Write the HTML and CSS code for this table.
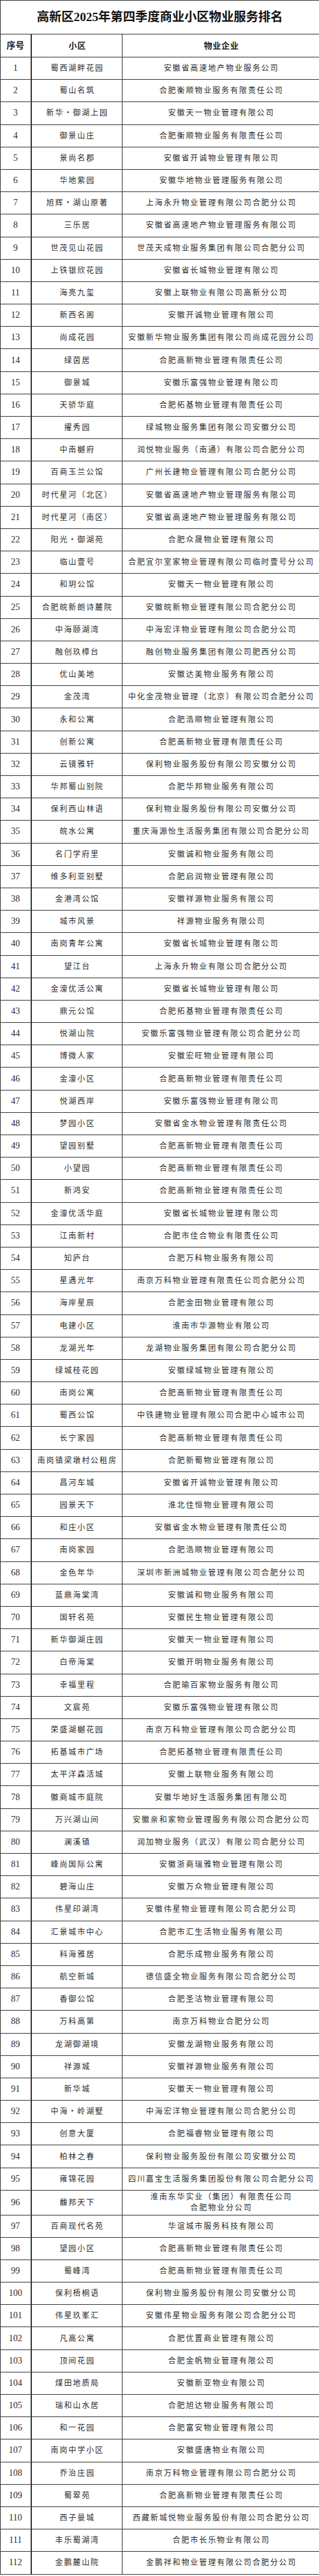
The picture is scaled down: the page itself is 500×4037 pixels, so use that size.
FILE: index.html
```html
<!DOCTYPE html>
<html lang="zh-CN">
<head>
<meta charset="utf-8">
<title>高新区2025年第四季度商业小区物业服务排名</title>
<link rel="stylesheet" href="styles.css">
</head>
<body>
<table class="rank">
<colgroup><col class="c-no"><col class="c-name"><col class="c-co"></colgroup>
<thead>
<tr class="title-row"><th colspan="3" class="title">高新区2025年第四季度商业小区物业服务排名</th></tr>
<tr class="head-row"><th class="h no">序号</th><th class="h">小区</th><th class="h">物业企业</th></tr>
</thead>
<tbody>
<tr><td class="no">1</td><td>蜀西湖畔花园</td><td>安徽省高速地产物业服务公司</td></tr>
<tr><td class="no">2</td><td>蜀山名筑</td><td>合肥衡顺物业服务有限责任公司</td></tr>
<tr><td class="no">3</td><td>新华・御湖上园</td><td>安徽天一物业管理有限公司</td></tr>
<tr><td class="no">4</td><td>御景山庄</td><td>合肥衡顺物业服务有限责任公司</td></tr>
<tr><td class="no">5</td><td>景尚名郡</td><td>安徽省开诚物业管理有限公司</td></tr>
<tr><td class="no">6</td><td>华地紫园</td><td>安徽华地物业管理服务有限公司</td></tr>
<tr><td class="no">7</td><td>旭辉・湖山原著</td><td>上海永升物业管理有限公司合肥分公司</td></tr>
<tr><td class="no">8</td><td>三乐居</td><td>安徽省高速地产物业管理服务有限公司</td></tr>
<tr><td class="no">9</td><td>世茂见山花园</td><td>世茂天成物业服务集团有限公司合肥分公司</td></tr>
<tr><td class="no">10</td><td>上铁银欣花园</td><td>安徽省长城物业管理有限公司</td></tr>
<tr><td class="no">11</td><td>海亮九玺</td><td>安徽上联物业有限公司高新分公司</td></tr>
<tr><td class="no">12</td><td>新西名阁</td><td>安徽开诚物业管理有限公司</td></tr>
<tr><td class="no">13</td><td>尚成花园</td><td>安徽新华物业服务集团有限公司尚成花园分公司</td></tr>
<tr><td class="no">14</td><td>绿茵居</td><td>合肥高新物业管理有限责任公司</td></tr>
<tr><td class="no">15</td><td>御景城</td><td>安徽乐富强物业管理有限公司</td></tr>
<tr><td class="no">16</td><td>天骄华庭</td><td>合肥拓基物业管理有限责任公司</td></tr>
<tr><td class="no">17</td><td>擢秀园</td><td>绿城物业服务集团有限公司安徽分公司</td></tr>
<tr><td class="no">18</td><td>中南樾府</td><td>润悦物业服务（南通）有限公司合肥分公司</td></tr>
<tr><td class="no">19</td><td>百商玉兰公馆</td><td>广州长建物业管理有限公司合肥分公司</td></tr>
<tr><td class="no">20</td><td>时代星河（北区）</td><td>安徽省高速地产物业管理服务有限公司</td></tr>
<tr><td class="no">21</td><td>时代星河（南区）</td><td>安徽省高速地产物业管理服务有限公司</td></tr>
<tr><td class="no">22</td><td>阳光・御湖苑</td><td>合肥众晟物业管理有限公司</td></tr>
<tr><td class="no">23</td><td>临山壹号</td><td>合肥宜尔室家物业管理有限公司临时壹号分公司</td></tr>
<tr><td class="no">24</td><td>和玥公馆</td><td>安徽天一物业管理有限公司</td></tr>
<tr><td class="no">25</td><td>合肥皖新朗诗麓院</td><td>安徽皖新物业管理有限公司合肥分公司</td></tr>
<tr><td class="no">26</td><td>中海颐湖湾</td><td>中海宏洋物业管理有限公司合肥分公司</td></tr>
<tr><td class="no">27</td><td>融创玖樟台</td><td>融创物业服务集团有限公司肥西分公司</td></tr>
<tr><td class="no">28</td><td>优山美地</td><td>安徽达美物业服务有限公司</td></tr>
<tr><td class="no">29</td><td>金茂湾</td><td>中化金茂物业管理（北京）有限公司合肥分公司</td></tr>
<tr><td class="no">30</td><td>永和公寓</td><td>合肥浩顺物业管理有限公司</td></tr>
<tr><td class="no">31</td><td>创新公寓</td><td>合肥高新物业管理有限责任公司</td></tr>
<tr><td class="no">32</td><td>云镜雅轩</td><td>保利物业服务股份有限公司安徽分公司</td></tr>
<tr><td class="no">33</td><td>华邦蜀山别院</td><td>合肥华邦物业服务有限公司</td></tr>
<tr><td class="no">34</td><td>保利西山林语</td><td>保利物业服务股份有限公司安徽分公司</td></tr>
<tr><td class="no">35</td><td>皖水公寓</td><td>重庆海源怡生活服务集团有限公司合肥分公司</td></tr>
<tr><td class="no">36</td><td>名门学府里</td><td>安徽诚和物业服务有限公司</td></tr>
<tr><td class="no">37</td><td>维多利亚别墅</td><td>合肥启润物业管理有限公司</td></tr>
<tr><td class="no">38</td><td>金港湾公馆</td><td>安徽祥源物业服务有限公司</td></tr>
<tr><td class="no">39</td><td>城市风景</td><td>祥源物业服务有限公司</td></tr>
<tr><td class="no">40</td><td>南岗青年公寓</td><td>安徽省长城物业管理有限公司</td></tr>
<tr><td class="no">41</td><td>望江台</td><td>上海永升物业有限公司合肥分公司</td></tr>
<tr><td class="no">42</td><td>金濠优活公寓</td><td>安徽省长城物业管理有限公司</td></tr>
<tr><td class="no">43</td><td>鼎元公馆</td><td>合肥拓基物业管理有限责任公司</td></tr>
<tr><td class="no">44</td><td>悦湖山院</td><td>安徽乐富强物业管理有限公司合肥分公司</td></tr>
<tr><td class="no">45</td><td>博微人家</td><td>安徽宏旺物业管理有限公司</td></tr>
<tr><td class="no">46</td><td>金濠小区</td><td>合肥高新物业管理有限责任公司</td></tr>
<tr><td class="no">47</td><td>悦湖西岸</td><td>安徽乐富强物业管理有限公司</td></tr>
<tr><td class="no">48</td><td>梦园小区</td><td>安徽省金水物业管理有限责任公司</td></tr>
<tr><td class="no">49</td><td>望园别墅</td><td>合肥高新物业管理有限责任公司</td></tr>
<tr><td class="no">50</td><td>小望园</td><td>合肥高新物业管理有限责任公司</td></tr>
<tr><td class="no">51</td><td>新鸿安</td><td>合肥高新物业管理有限责任公司</td></tr>
<tr><td class="no">52</td><td>金濠优活华庭</td><td>安徽省长城物业管理有限公司</td></tr>
<tr><td class="no">53</td><td>江南新村</td><td>合肥市佳合物业有限责任公司</td></tr>
<tr><td class="no">54</td><td>知庐台</td><td>合肥万科物业服务有限公司</td></tr>
<tr><td class="no">55</td><td>星遇光年</td><td>南京万科物业管理有限责任公司合肥分公司</td></tr>
<tr><td class="no">56</td><td>海岸星辰</td><td>合肥金田物业管理有限公司</td></tr>
<tr><td class="no">57</td><td>电建小区</td><td>淮南市华源物业有限公司</td></tr>
<tr><td class="no">58</td><td>龙湖光年</td><td>龙湖物业服务集团有限公司合肥分公司</td></tr>
<tr><td class="no">59</td><td>绿城桂花园</td><td>安徽绿城物业管理有限公司</td></tr>
<tr><td class="no">60</td><td>南岗公寓</td><td>合肥高新物业管理有限责任公司</td></tr>
<tr><td class="no">61</td><td>蜀西公馆</td><td>中铁建物业管理有限公司合肥中心城市公司</td></tr>
<tr><td class="no">62</td><td>长宁家园</td><td>合肥高新物业管理有限责任公司</td></tr>
<tr><td class="no">63</td><td>南岗镇梁墩村公租房</td><td>合肥新蜀物业管理有限公司</td></tr>
<tr><td class="no">64</td><td>昌河车城</td><td>安徽省开诚物业管理有限公司</td></tr>
<tr><td class="no">65</td><td>园景天下</td><td>淮北佳恒物业管理有限公司</td></tr>
<tr><td class="no">66</td><td>和庄小区</td><td>安徽省金水物业管理有限责任公司</td></tr>
<tr><td class="no">67</td><td>南岗家园</td><td>合肥浩顺物业管理有限公司</td></tr>
<tr><td class="no">68</td><td>金色年华</td><td>深圳市新洲城物业管理有限公司合肥分公司</td></tr>
<tr><td class="no">69</td><td>蓝鼎海棠湾</td><td>安徽诚和物业服务有限公司</td></tr>
<tr><td class="no">70</td><td>国轩名苑</td><td>安徽民生物业管理有限公司</td></tr>
<tr><td class="no">71</td><td>新华御湖庄园</td><td>安徽天一物业管理有限公司</td></tr>
<tr><td class="no">72</td><td>白帝海棠</td><td>安徽开明物业服务有限公司</td></tr>
<tr><td class="no">73</td><td>幸福里程</td><td>合肥瑜百家物业服务有限公司</td></tr>
<tr><td class="no">74</td><td>文宸苑</td><td>安徽乐富强物业管理有限公司</td></tr>
<tr><td class="no">75</td><td>荣盛湖樾花园</td><td>南京万科物业管理有限公司合肥分公司</td></tr>
<tr><td class="no">76</td><td>拓基城市广场</td><td>合肥拓基物业管理有限责任公司</td></tr>
<tr><td class="no">77</td><td>太平洋森活城</td><td>安徽上联物业服务有限公司</td></tr>
<tr><td class="no">78</td><td>徽商城市庭院</td><td>安徽华地好生活服务集团有限公司</td></tr>
<tr><td class="no">79</td><td>万兴湖山间</td><td>安徽亲和家物业管理服务有限公司合肥分公司</td></tr>
<tr><td class="no">80</td><td>澜溪镇</td><td>润加物业服务（武汉）有限公司合肥分公司</td></tr>
<tr><td class="no">81</td><td>峰尚国际公寓</td><td>安徽浙商瑞雅物业管理有限公司</td></tr>
<tr><td class="no">82</td><td>碧海山庄</td><td>安徽万众物业管理有限公司</td></tr>
<tr><td class="no">83</td><td>伟星印湖湾</td><td>安徽伟星物业管理有限公司合肥分公司</td></tr>
<tr><td class="no">84</td><td>汇景城市中心</td><td>合肥市汇生活物业服务有限公司</td></tr>
<tr><td class="no">85</td><td>科海雅居</td><td>合肥乐成物业服务有限公司</td></tr>
<tr><td class="no">86</td><td>航空新城</td><td>德信盛全物业服务有限公司合肥分公司</td></tr>
<tr><td class="no">87</td><td>香御公馆</td><td>合肥圣洁物业管理有限公司</td></tr>
<tr><td class="no">88</td><td>万科高第</td><td>南京万科物业合肥分公司</td></tr>
<tr><td class="no">89</td><td>龙湖御湖境</td><td>安徽龙湖物业服务有限公司</td></tr>
<tr><td class="no">90</td><td>祥源城</td><td>安徽祥源物业服务有限公司</td></tr>
<tr><td class="no">91</td><td>新华城</td><td>安徽天一物业管理有限公司</td></tr>
<tr><td class="no">92</td><td>中海・岭湖墅</td><td>中海宏洋物业管理有限公司合肥分公司</td></tr>
<tr><td class="no">93</td><td>创意大厦</td><td>合肥福睿物业管理有限公司</td></tr>
<tr><td class="no">94</td><td>柏林之春</td><td>保利物业服务股份有限公司安徽分公司</td></tr>
<tr><td class="no">95</td><td>雍锦花园</td><td>四川嘉宝生活服务集团股份有限公司合肥分公司</td></tr>
<tr class="tall"><td class="no">96</td><td>馥邦天下</td><td class="two">淮南东华实业（集团）有限责任公司<br>合肥物业分公司</td></tr>
<tr><td class="no">97</td><td>百商现代名苑</td><td>华谊城市服务科技有限公司</td></tr>
<tr><td class="no">98</td><td>望园小区</td><td>合肥高新物业管理有限责任公司</td></tr>
<tr><td class="no">99</td><td>蜀峰湾</td><td>合肥高新物业管理有限责任公司</td></tr>
<tr><td class="no">100</td><td>保利梧桐语</td><td>保利物业服务股份有限公司安徽分公司</td></tr>
<tr><td class="no">101</td><td>伟星玖峯汇</td><td>安徽伟星物业服务有限公司合肥分公司</td></tr>
<tr><td class="no">102</td><td>凡高公寓</td><td>合肥优置商业管理有限公司</td></tr>
<tr><td class="no">103</td><td>顶间花园</td><td>合肥金帆物业管理有限公司</td></tr>
<tr><td class="no">104</td><td>煤田地质局</td><td>安徽新亚物业有限公司</td></tr>
<tr><td class="no">105</td><td>瑞和山水居</td><td>合肥旭达物业服务有限公司</td></tr>
<tr><td class="no">106</td><td>和一花园</td><td>合肥富安物业管理有限公司</td></tr>
<tr><td class="no">107</td><td>南岗中学小区</td><td>安徽盛唐物业有限公司</td></tr>
<tr><td class="no">108</td><td>乔治庄园</td><td>南京万科物业管理有限公司合肥分公司</td></tr>
<tr><td class="no">109</td><td>蜀翠苑</td><td>合肥高新物业管理有限责任公司</td></tr>
<tr><td class="no">110</td><td>西子曼城</td><td>西藏新城悦物业服务股份有限公司合肥分公司</td></tr>
<tr><td class="no">111</td><td>丰乐蜀湖湾</td><td>合肥市长乐物业有限公司</td></tr>
<tr><td class="no">112</td><td>金鹏麓山院</td><td>金鹏祥和物业管理有限公司合肥分公司</td></tr>
</tbody>
</table>
</body>
</html>
```

FILE: styles.css
```css
html, body {
  margin: 0;
  padding: 0;
  background: #ffffff;
}

.rank {
  width: 500px;
  border-collapse: collapse;
  table-layout: fixed;
  font-family: "Liberation Serif", "Noto Sans CJK SC", serif;
  color: #2b2b2b;
}

.c-no { width: 48px; }
.c-name { width: 143px; }
.c-co { width: 309px; }

.rank th,
.rank td {
  border: 1px solid #333333;
  padding: 0 0 0 2px;
  text-align: center;
  vertical-align: middle;
  white-space: nowrap;
  font-size: 12px;
  letter-spacing: 1.9px;
  font-weight: 400;
  line-height: 16px;
}

.rank tbody tr { height: 35.2px; }
.rank tbody tr.tall { height: 38.7px; }

.rank .title-row { height: 53px; }
.rank .title {
  font-size: 19.3px;
  font-weight: 700;
  letter-spacing: 0;
  padding: 0;
  color: #111111;
  line-height: 24px;
}

.rank .head-row { height: 36px; }
.rank .h {
  font-size: 13px;
  font-weight: 700;
  letter-spacing: 0.7px;
  color: #222222;
}

.rank .no {
  font-size: 14px;
  letter-spacing: 0;
  padding: 0;
  border-right: 2px solid #333333;
}

.rank .two {
  line-height: 17px;
}
```
